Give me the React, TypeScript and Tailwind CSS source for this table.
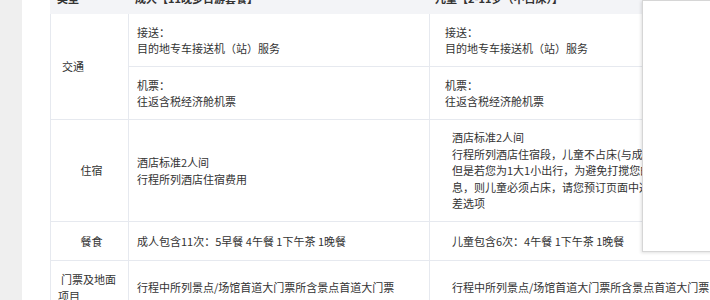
export default function App() {
  const font = { fontFamily: '"Noto Sans CJK SC", "Noto Sans", sans-serif' };
  return (
    <div
      className="relative flex h-[300px] w-[710px] overflow-hidden bg-white text-[11px] leading-[16.5px] text-[#333]"
      style={font}
    >
      <div className="w-[22px] shrink-0 bg-[#efefef]" />

      <section className="-mt-[18px] ml-[28px] flex w-[700px] shrink-0 flex-col">
        {/* header */}
        <div className="flex h-[32px] shrink-0 items-center bg-[#f3f4f7] font-bold">
          <div className="w-[79px] pl-[7px]">类型</div>
          <div className="w-[301px] pl-[6px]">成人【11晚多日游套餐】</div>
          <div className="flex-1 pl-[5px]">儿童【2-11岁（不占床）】</div>
        </div>

        {/* 交通 */}
        <div className="flex shrink-0 border-b border-[#e6e9ef]">
          <div className="flex w-[79px] items-center border-x border-[#e6e9ef] pl-[11px]">交通</div>
          <div className="flex flex-1 flex-col">
            <div className="flex h-[53px] shrink-0 border-b border-[#e6e9ef]">
              <div className="flex w-[301px] flex-col justify-center border-r border-[#e6e9ef] pl-2">
                <p>接送：</p>
                <p>目的地专车接送机（站）服务</p>
              </div>
              <div className="flex flex-1 flex-col justify-center pl-[15px]">
                <p>接送：</p>
                <p>目的地专车接送机（站）服务</p>
              </div>
            </div>
            <div className="flex h-[52px] shrink-0">
              <div className="flex w-[301px] flex-col justify-center border-r border-[#e6e9ef] pl-2">
                <p>机票：</p>
                <p>往返含税经济舱机票</p>
              </div>
              <div className="flex flex-1 flex-col justify-center pl-[15px]">
                <p>机票：</p>
                <p>往返含税经济舱机票</p>
              </div>
            </div>
          </div>
        </div>

        {/* 住宿 */}
        <div className="flex h-[102px] shrink-0 border-b border-[#e6e9ef]">
          <div className="flex w-[79px] items-center justify-center border-x border-[#e6e9ef] pl-[4px]">住宿</div>
          <div className="flex w-[301px] flex-col justify-center border-r border-[#e6e9ef] pl-2">
            <p>酒店标准2人间</p>
            <p>行程所列酒店住宿费用</p>
          </div>
          <div className="flex flex-1 flex-col justify-center whitespace-nowrap pl-[22px]">
            <p>酒店标准2人间</p>
            <p>行程所列酒店住宿段，儿童不占床(与成人同住)，</p>
            <p>但是若您为1大1小出行，为避免打搅您的休</p>
            <p>息，则儿童必须占床，请您预订页面中选择单房</p>
            <p>差选项</p>
          </div>
        </div>

        {/* 餐食 */}
        <div className="flex h-[39px] shrink-0 border-b border-[#e6e9ef]">
          <div className="flex w-[79px] items-center justify-center border-x border-[#e6e9ef] pl-[4px]">餐食</div>
          <div className="flex w-[301px] items-center border-r border-[#e6e9ef] pl-2">
            成人包含11次：5早餐 4午餐 1下午茶 1晚餐
          </div>
          <div className="flex flex-1 items-center pl-[22px]">儿童包含6次：4午餐 1下午茶 1晚餐</div>
        </div>

        {/* 门票 */}
        <div className="flex h-[54px] shrink-0 border-b border-[#e6e9ef]">
          <div className="flex w-[79px] flex-col justify-center border-x border-[#e6e9ef] pl-[7px]">
            <p className="pl-[3px]">门票及地面</p>
            <p>项目</p>
          </div>
          <div className="flex w-[301px] items-center overflow-hidden whitespace-nowrap border-r border-[#e6e9ef] pl-2">
            行程中所列景点/场馆首道大门票所含景点首道大门票
          </div>
          <div className="flex flex-1 items-center whitespace-nowrap pl-[22px]">
            行程中所列景点/场馆首道大门票所含景点首道大门票
          </div>
        </div>
      </section>

      {/* overlay panel */}
      <div className="absolute left-[642px] top-0 h-[252px] w-[90px] border border-[#d6d6d6] bg-white shadow-[-1px_1px_3px_rgba(0,0,0,0.12)]" />
    </div>
  );
}
